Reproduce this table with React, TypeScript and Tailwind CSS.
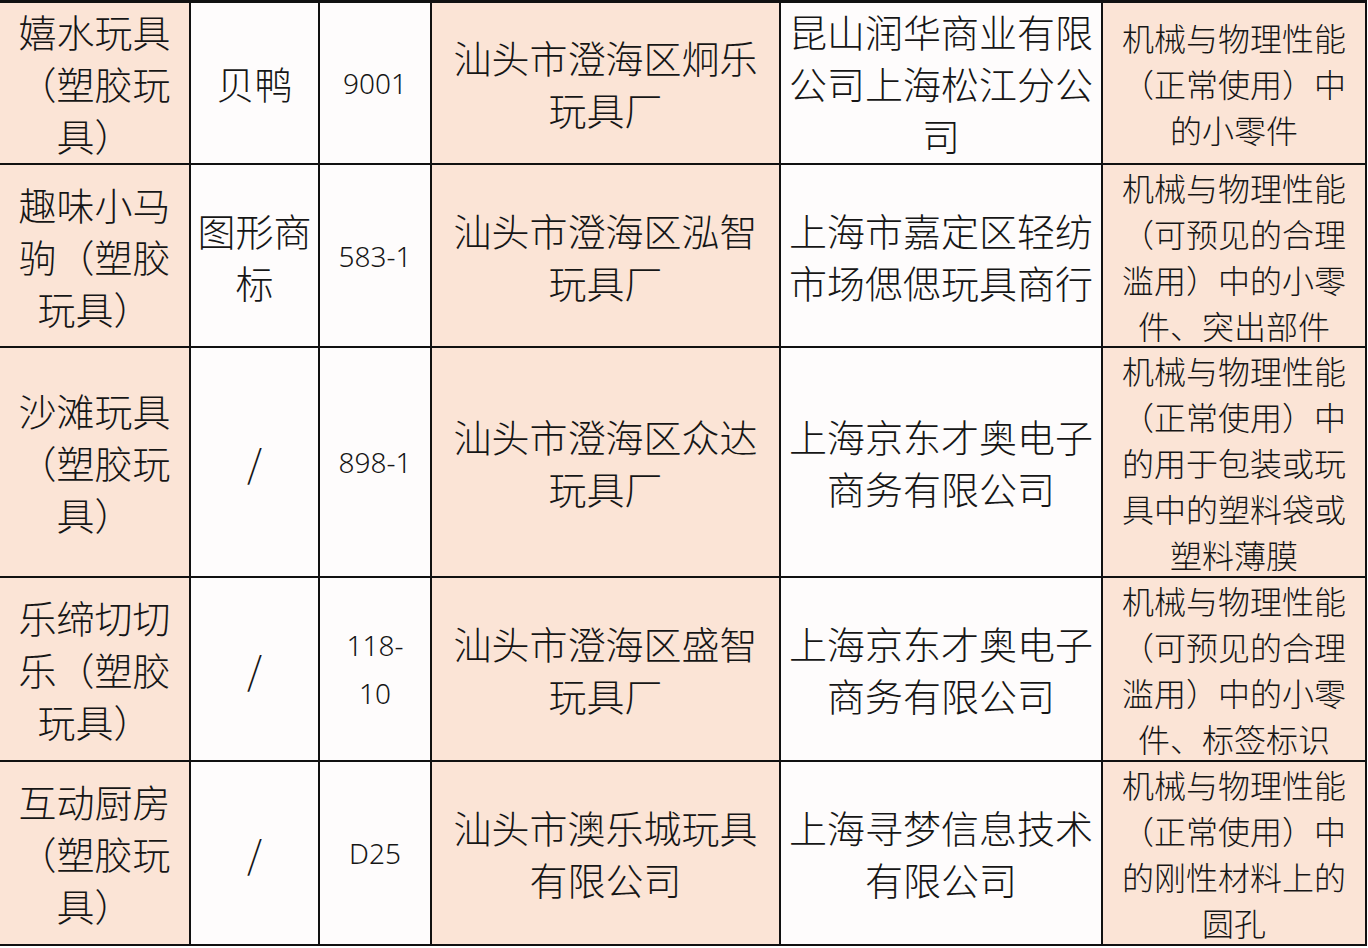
import React from "react";

type Row = {
    h: string;
    name: string[];
    brand: string[];
    model: string[];
    maker: string[];
    seller: string[];
    item: string[];
};

const ROWS: Row[] = [
    {
        h: "h-[160px]",
        name: ["嬉水玩具", "（塑胶玩", "具）"],
        brand: ["贝鸭"],
        model: ["9001"],
        maker: ["汕头市澄海区炯乐", "玩具厂"],
        seller: ["昆山润华商业有限", "公司上海松江分公", "司"],
        item: ["机械与物理性能", "（正常使用）中", "的小零件"],
    },
    {
        h: "h-[181px]",
        name: ["趣味小马", "驹（塑胶", "玩具）"],
        brand: ["图形商", "标"],
        model: ["583-1"],
        maker: ["汕头市澄海区泓智", "玩具厂"],
        seller: ["上海市嘉定区轻纺", "市场偲偲玩具商行"],
        item: ["机械与物理性能", "（可预见的合理", "滥用）中的小零", "件、突出部件"],
    },
    {
        h: "h-[228px]",
        name: ["沙滩玩具", "（塑胶玩", "具）"],
        brand: ["/"],
        model: ["898-1"],
        maker: ["汕头市澄海区众达", "玩具厂"],
        seller: ["上海京东才奥电子", "商务有限公司"],
        item: ["机械与物理性能", "（正常使用）中", "的用于包装或玩", "具中的塑料袋或", "塑料薄膜"],
    },
    {
        h: "h-[182px]",
        name: ["乐缔切切", "乐（塑胶", "玩具）"],
        brand: ["/"],
        model: ["118-", "10"],
        maker: ["汕头市澄海区盛智", "玩具厂"],
        seller: ["上海京东才奥电子", "商务有限公司"],
        item: ["机械与物理性能", "（可预见的合理", "滥用）中的小零", "件、标签标识"],
    },
    {
        h: "h-[182px]",
        name: ["互动厨房", "（塑胶玩", "具）"],
        brand: ["/"],
        model: ["D25"],
        maker: ["汕头市澳乐城玩具", "有限公司"],
        seller: ["上海寻梦信息技术", "有限公司"],
        item: ["机械与物理性能", "（正常使用）中", "的刚性材料上的", "圆孔"],
    },
];

const peach = "bg-[#fbe4d6]";
const plain = "bg-[#fefcfc]";

const Cell = ({ lines, tone, size }: { lines: string[]; tone: string; size: string }) => (
    <div className={`${tone} flex flex-col items-center justify-center text-center whitespace-nowrap ${size}`}>
        {lines.map((l, i) => (
            <span key={i}>{l}</span>
        ))}
    </div>
);

export default function App() {
    const big = "text-[38px] leading-[52px]";
    return (
        <div className="w-[1368px] h-[948px] bg-white">
            <div
                className="grid w-[1367px] grid-cols-[189px_127px_110px_347px_320px_262px] gap-[2px] bg-[#111] pt-[3px] pr-[2px] pb-[2px] font-light text-[#161616]"
                style={{ fontFamily: '"Noto Sans CJK SC", "Noto Sans", sans-serif' }}
            >
                {ROWS.map((r, i) => (
                    <React.Fragment key={i}>
                        <Cell lines={r.name} tone={peach} size={big} />
                        <Cell lines={r.brand} tone={plain} size={big} />
                        <div
                            className={`${plain} flex flex-col items-center justify-center text-[28px] leading-[48px]`}
                            style={{ fontFamily: '"Noto Sans", sans-serif' }}
                        >
                            {r.model.map((m, j) => (
                                <span key={j}>{m}</span>
                            ))}
                        </div>
                        <Cell lines={r.maker} tone={peach} size={big} />
                        <Cell lines={r.seller} tone={plain} size={big} />
                        <div className={`${peach} ${r.h} flex flex-col items-center justify-center text-center whitespace-nowrap text-[32px] leading-[46px]`}>
                            {r.item.map((l, j) => (
                                <span key={j}>{l}</span>
                            ))}
                        </div>
                    </React.Fragment>
                ))}
            </div>
        </div>
    );
}
